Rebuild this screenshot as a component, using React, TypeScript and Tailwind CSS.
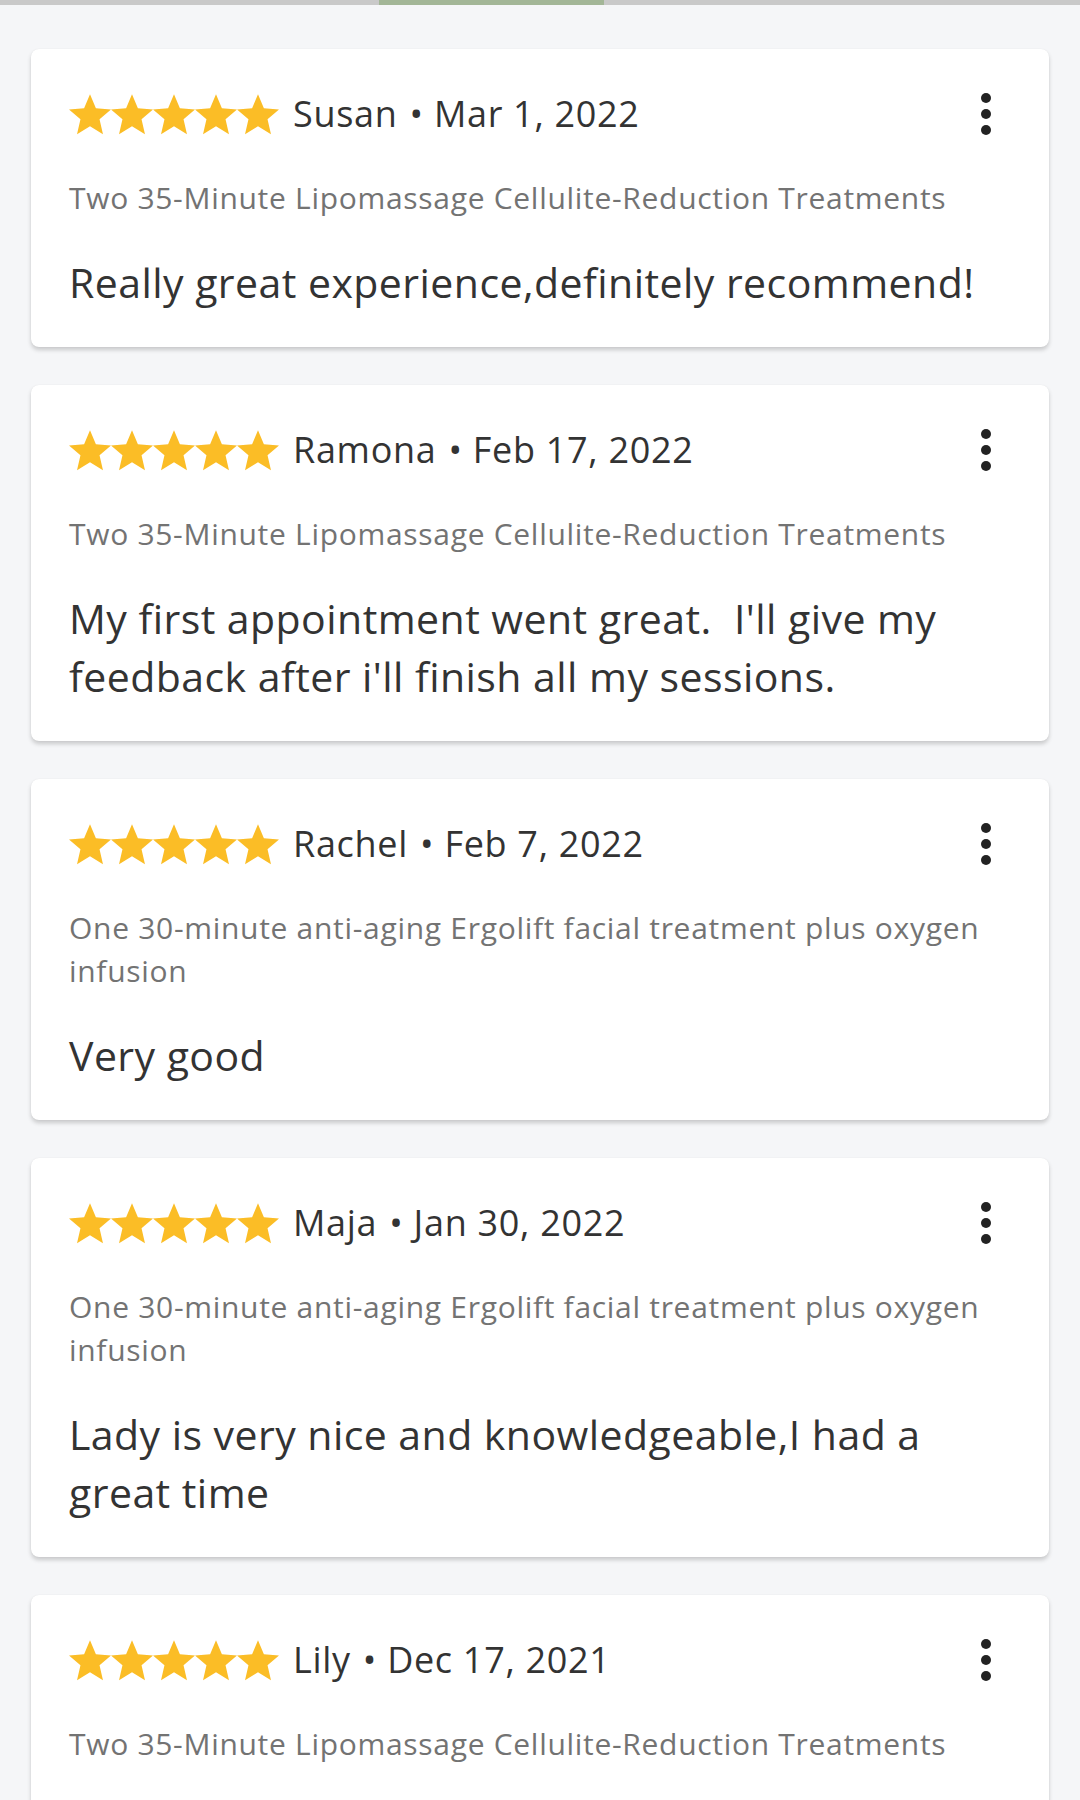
import React from 'react'

type Review = { name: string; date: string; deal: string; text?: string }

const reviews: Review[] = [
  { name: 'Susan', date: 'Mar 1, 2022', deal: 'Two 35-Minute Lipomassage Cellulite-Reduction Treatments', text: 'Really great experience,definitely recommend!' },
  { name: 'Ramona', date: 'Feb 17, 2022', deal: 'Two 35-Minute Lipomassage Cellulite-Reduction Treatments', text: "My first appointment went great.  I'll give my feedback after i'll finish all my sessions." },
  { name: 'Rachel', date: 'Feb 7, 2022', deal: 'One 30-minute anti-aging Ergolift facial treatment plus oxygen infusion', text: 'Very good' },
  { name: 'Maja', date: 'Jan 30, 2022', deal: 'One 30-minute anti-aging Ergolift facial treatment plus oxygen infusion', text: 'Lady is very nice and knowledgeable,I had a great time' },
  // last one is cut off by the bottom of the screen
  { name: 'Lily', date: 'Dec 17, 2021', deal: 'Two 35-Minute Lipomassage Cellulite-Reduction Treatments' },
]

function Star() {
  return (
    <svg viewBox="2 2 20 19.3" className="w-[42px] h-[41px]" fill="#fbbd26">
      <path d="M12 17.27L18.18 21l-1.64-7.03L22 9.24l-7.19-.61L12 2 9.19 8.63 2 9.24l5.46 4.73L5.82 21z" />
    </svg>
  )
}

function Kebab() {
  return (
    <svg viewBox="0 0 12 44" className="w-[12px] h-[44px]" fill="#222">
      <circle cx="6" cy="6" r="5" />
      <circle cx="6" cy="22" r="5" />
      <circle cx="6" cy="38" r="5" />
    </svg>
  )
}

function ReviewCard({ r }: { r: Review }) {
  return (
    <div className={'bg-white rounded-lg shadow-[0_3px_4px_rgba(0,0,0,0.18),0_0_1px_rgba(0,0,0,0.08)] pl-[38px] pr-[57px] pt-[40px] pb-[36px] ' + (r.text ? '' : 'min-h-[320px]')}>
      <div className="h-[50px] flex items-center justify-between">
        <div className="flex items-center">
          <div className="flex">
            <Star /><Star /><Star /><Star /><Star />
          </div>
          <span className="ml-[14px] text-[36px] tracking-[0.7px] text-[#333] whitespace-pre">
            {r.name}<span className="ml-[12px]">•</span> {r.date}
          </span>
        </div>
        <Kebab />
      </div>
      <p className="mt-[37px] text-[30px] leading-[43px] tracking-[0.7px] text-[#737373]">{r.deal}</p>
      {r.text && (
        <p className="mt-[34px] text-[41px] leading-[58px] tracking-[0.45px] text-[#333] whitespace-pre-wrap">{r.text}</p>
      )}
    </div>
  )
}

export default function App() {
  return (
    <div className="w-[1080px] h-[1800px] overflow-hidden bg-[#f5f6f8]" style={{ fontFamily: '"Open Sans", sans-serif' }}>
      <div className="h-[5px] bg-[#c9c9c9] flex">
        <div className="ml-[379px] w-[225px] bg-[#a3b697]" />
      </div>
      <div className="px-[31px] pt-[44px] flex flex-col gap-[38px]">
        {reviews.map((r) => <ReviewCard key={r.name} r={r} />)}
      </div>
    </div>
  )
}
